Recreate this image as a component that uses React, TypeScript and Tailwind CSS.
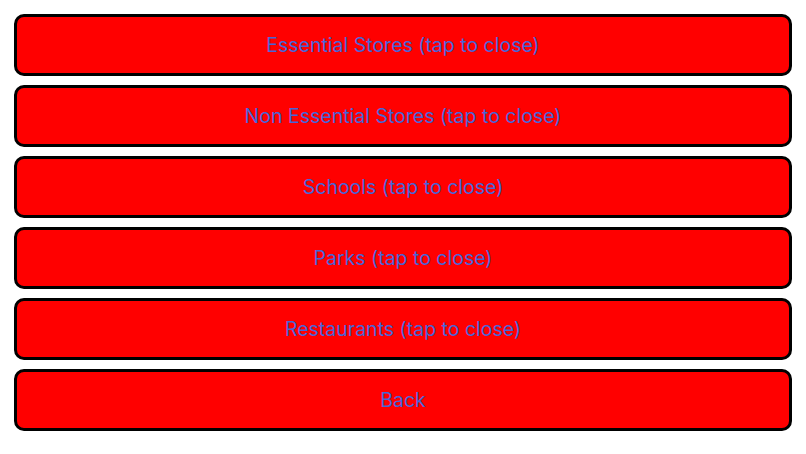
const items = [
  'Essential Stores (tap to close)',
  'Non Essential Stores (tap to close)',
  'Schools (tap to close)',
  'Parks (tap to close)',
  'Restaurants (tap to close)',
  'Back',
]

export default function App() {
  return (
    <div className="min-h-screen bg-white pt-[14px] px-[14px] font-['Inter',sans-serif]">
      <div className="flex flex-col gap-[9px]">
        {items.map((label) => (
          <button
            key={label}
            className="h-[62px] w-full rounded-[10px] border-[3px] border-black bg-[#ff0000] pt-[2px] text-[19.5px] text-[#4865d8]"
          >
            {label}
          </button>
        ))}
      </div>
    </div>
  )
}
